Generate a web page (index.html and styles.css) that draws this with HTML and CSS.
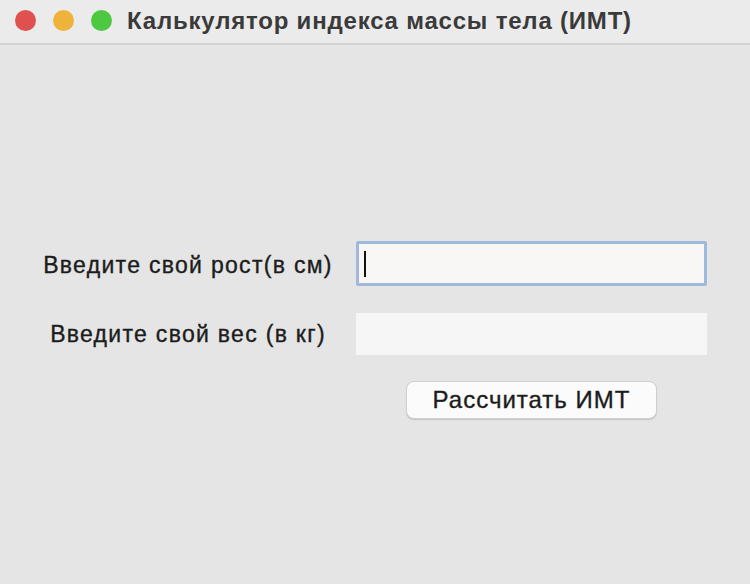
FILE: index.html
```html
<!DOCTYPE html>
<html lang="ru">
<head>
<meta charset="utf-8">
<link rel="stylesheet" href="styles.css">
</head>
<body>
<div class="window">
  <header class="titlebar">
    <div class="lights">
      <span class="light red"></span>
      <span class="light yellow"></span>
      <span class="light green"></span>
    </div>
    <div class="title">Калькулятор индекса массы тела (ИМТ)</div>
  </header>
  <main class="content">
    <div class="form">
      <label class="label first">Введите свой рост(в см)</label>
      <div class="field focused"><span class="caret"></span></div>
      <label class="label">Введите свой вес (в кг)</label>
      <div class="field"></div>
      <div></div>
      <div class="btnwrap"><button class="btn">Рассчитать ИМТ</button></div>
    </div>
  </main>
</div>
</body>
</html>
```
FILE: styles.css
```css
html, body {
  margin: 0;
  padding: 0;
  width: 750px;
  height: 584px;
  overflow: hidden;
  background: #e5e5e5;
  font-family: "Liberation Sans", Arial, sans-serif;
}
.window {
  height: 584px;
  display: flex;
  flex-direction: column;
}
.titlebar {
  height: 40px;
  padding-bottom: 3px;
  background: #ebebeb;
  border-bottom: 2px solid #d3d3d3;
  display: flex;
  align-items: center;
  padding-left: 15px;
  box-sizing: content-box;
}
.lights {
  display: flex;
  gap: 17px;
}
.light {
  width: 21px;
  height: 21px;
  border-radius: 50%;
  display: block;
}
.red { background: #e0504f; }
.yellow { background: #edb33a; }
.green { background: #4ec840; }
.title {
  margin-left: 15px;
  font-weight: bold;
  font-size: 24px;
  letter-spacing: 0.8px;
  color: #3a3a3a;
  padding-top: 1px;
}
.content {
  flex: 1;
  padding-top: 196px;
  padding-left: 20px;
}
.form {
  display: grid;
  grid-template-columns: 336px 351px;
  grid-template-rows: 45px 42px 38px;
  row-gap: 27px;
  align-items: center;
}
.label {
  text-align: center;
  font-size: 23px;
  letter-spacing: 1.3px;
  color: #1c1c1c;
  -webkit-text-stroke: 0.35px #1c1c1c;
}
.label.first {
  padding-top: 4px;
}
.field {
  height: 100%;
  background: #f6f6f6;
  box-sizing: border-box;
  position: relative;
}
.field.focused {
  border: 3px solid #9fb9dc;
  border-radius: 2px;
  background: #f8f7f6;
}
.caret {
  position: absolute;
  left: 5px;
  top: 7px;
  width: 2px;
  height: 26px;
  background: #111;
}
.btnwrap {
  margin-top: -2px;
  padding-left: 50px;
}
.btn {
  width: 251px;
  height: 38px;
  border: 1px solid #cfcfcf;
  border-radius: 8px;
  background: #fbfbfb;
  box-shadow: 0 1px 1px rgba(0,0,0,0.15);
  font-family: "Liberation Sans", Arial, sans-serif;
  font-size: 24px;
  letter-spacing: 1px;
  color: #1c1c1c;
  -webkit-text-stroke: 0.35px #1c1c1c;
  padding: 0;
}
```
